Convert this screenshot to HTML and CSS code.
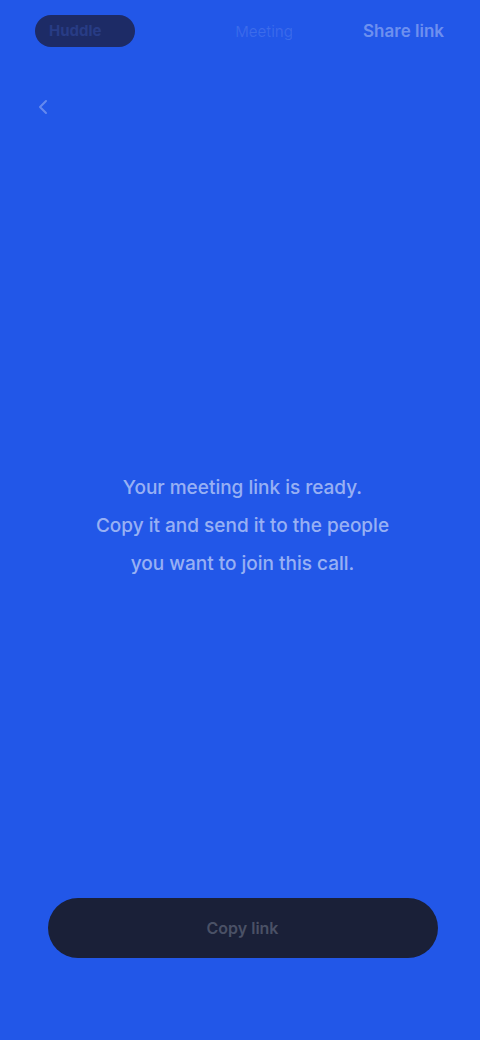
FILE: index.html
```html
<!DOCTYPE html>
<html lang="en">
<head>
<meta charset="utf-8">
<title>Invite</title>
<link rel="stylesheet" href="styles.css">
</head>
<body>
<div class="screen">
  <header class="topbar">
    <div class="brand">Huddle</div>
    <div class="mid">Meeting</div>
    <div class="right">Share link</div>
  </header>
  <div class="sub">
    <svg class="back" width="18" height="18" viewBox="0 0 18 18" fill="none" stroke="rgba(255,255,255,0.3)" stroke-width="2" stroke-linecap="round" stroke-linejoin="round"><path d="M11 3 L5 9 L11 15"/></svg>
  </div>
  <main class="center">
    <p class="message">Your meeting link is ready.<br>Copy it and send it to the people<br>you want to join this call.</p>
  </main>
  <footer class="bottom">
    <button class="cta">Copy link</button>
  </footer>
</div>
</body>
</html>
```
FILE: styles.css
```css
* { box-sizing: border-box; }
html, body { margin: 0; padding: 0; }
body {
  background: #2257e8;
  font-family: "Inter", "Liberation Sans", sans-serif;
  color: #fff;
}
.screen {
  width: 480px;
  height: 1040px;
  display: flex;
  flex-direction: column;
  padding: 14px 30px 82px 35px;
}
.topbar {
  display: flex;
  align-items: center;
  justify-content: space-between;
  height: 34px;
}
.brand {
  background: #1d2b66;
  color: #283c85;
  border-radius: 17px;
  width: 100px;
  height: 32px;
  line-height: 32px;
  font-size: 15px;
  font-weight: 700;
  padding-left: 14px;
}
.mid {
  font-size: 15px;
  color: rgba(255,255,255,0.12);
  margin-left: 30px;
}
.right {
  font-size: 17px;
  font-weight: 600;
  color: rgba(255,255,255,0.35);
  padding-right: 6px;
}
.sub {
  margin-top: 50px;
  height: 20px;
}
.back { display: block; }
.center {
  flex: 1;
  display: flex;
  align-items: center;
  justify-content: center;
  padding-top: 36px;
}
.message {
  margin: 0;
  text-align: center;
  font-size: 19px;
  line-height: 38px;
  font-weight: 500;
  color: rgba(255,255,255,0.55);
}
.bottom {
  display: flex;
  justify-content: center;
}
.cta {
  width: 390px;
  height: 60px;
  border: none;
  border-radius: 30px;
  background: #1a2038;
  color: #4a5166;
  font-family: "Inter", "Liberation Sans", sans-serif;
  font-size: 16px;
  font-weight: 600;
}
```
